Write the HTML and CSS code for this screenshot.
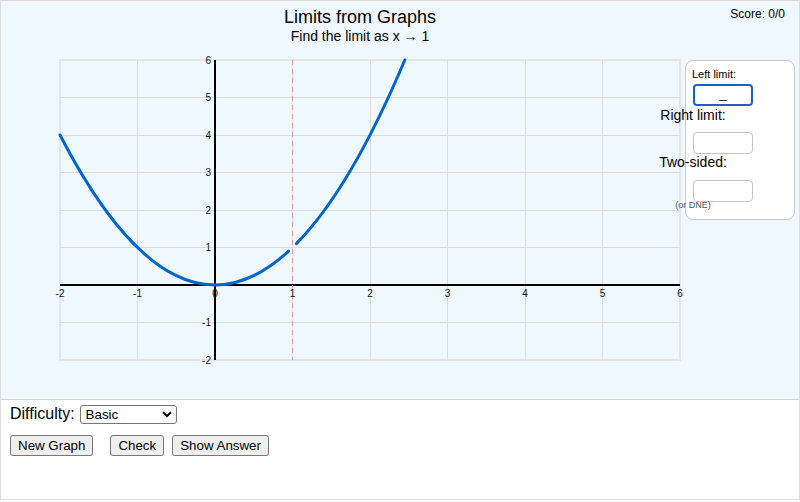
FILE: index.html
```html
<!DOCTYPE html>
<html lang="en">
<head>
<meta charset="utf-8">
<title>Limits from Graphs</title>
<link rel="stylesheet" href="styles.css">
</head>
<body>
<div class="app">
  <section class="stage">
    <header class="head">
      <h1 class="title">Limits from Graphs</h1>
      <p class="subtitle">Find the limit as x → 1</p>
    </header>
    <div class="score">Score: 0/0</div>
    <div class="board">
      <svg class="graph" width="684" height="320" viewBox="1 50 684 320" xmlns="http://www.w3.org/2000/svg">
        <rect x="60" y="60" width="620" height="300" fill="none" stroke="#e3e6e9" stroke-width="2"/>
        <g stroke="#dcdcdc" stroke-width="1" shape-rendering="crispEdges">
          <line x1="137.5" y1="60" x2="137.5" y2="360"/>
          <line x1="292.5" y1="60" x2="292.5" y2="360"/>
          <line x1="370.5" y1="60" x2="370.5" y2="360"/>
          <line x1="447.5" y1="60" x2="447.5" y2="360"/>
          <line x1="525.5" y1="60" x2="525.5" y2="360"/>
          <line x1="602.5" y1="60" x2="602.5" y2="360"/>
          <line x1="60" y1="97.5" x2="680" y2="97.5"/>
          <line x1="60" y1="135.5" x2="680" y2="135.5"/>
          <line x1="60" y1="172.5" x2="680" y2="172.5"/>
          <line x1="60" y1="210.5" x2="680" y2="210.5"/>
          <line x1="60" y1="247.5" x2="680" y2="247.5"/>
          <line x1="60" y1="322.5" x2="680" y2="322.5"/>
        </g>
        <g stroke="#000" stroke-width="2">
          <line x1="60" y1="285" x2="680" y2="285"/>
          <line x1="215" y1="60" x2="215" y2="360"/>
        </g>
        <line x1="292.5" y1="60" x2="292.5" y2="360" stroke="#e79a9a" stroke-width="1" stroke-dasharray="5 4"/>
        <g class="ticks" text-anchor="middle">
          <text x="60" y="297">-2</text>
          <text x="137.5" y="297">-1</text>
          <text x="215" y="297">0</text>
          <text x="292.5" y="297">1</text>
          <text x="370" y="297">2</text>
          <text x="447.5" y="297">3</text>
          <text x="525" y="297">4</text>
          <text x="602.5" y="297">5</text>
          <text x="680" y="297">6</text>
        </g>
        <g class="ticks" text-anchor="end">
          <text x="211" y="63.5">6</text>
          <text x="211" y="101">5</text>
          <text x="211" y="138.5">4</text>
          <text x="211" y="176">3</text>
          <text x="211" y="213.5">2</text>
          <text x="211" y="251">1</text>
          <text x="211" y="326">-1</text>
          <text x="211" y="363.5">-2</text>
        </g>
        <g fill="none" stroke="#0066cc" stroke-width="3" stroke-linecap="round">
          <path d="M60 135 Q174.31 356.25 288.63 251.16"/>
          <path d="M296.38 243.66 Q350.61 188.55 404.84 60"/>
        </g>
      </svg>
      <aside class="answers">
        <label class="lbl-small" for="left">Left limit:</label>
        <input id="left" class="ans ans-active" type="text" value="_">
        <label class="lbl-wide gap-a" for="right">Right limit:</label>
        <input id="right" class="ans ans-b" type="text">
        <label class="lbl-wide" for="two">Two-sided:</label>
        <input id="two" class="ans ans-c" type="text">
        <span class="hint">(or DNE)</span>
      </aside>
    </div>
  </section>
  <section class="controls">
    <div class="diff-row">
      <label class="diff-label" for="diff">Difficulty:</label>
      <span class="select-wrap">
        <select id="diff" class="select"><option>Basic</option><option>Intermediate</option><option>Advanced</option></select>
        <svg class="chev" width="10" height="7" viewBox="0 0 10 7"><path d="M1 1.2 L5 5.2 L9 1.2" fill="none" stroke="#000" stroke-width="2"/></svg>
      </span>
    </div>
    <div class="btn-row">
      <button class="btn btn-new" type="button">New Graph</button>
      <button class="btn btn-check" type="button">Check</button>
      <button class="btn" type="button">Show Answer</button>
    </div>
  </section>
</div>
</body>
</html>
```
FILE: styles.css
```css
* { box-sizing: border-box; }
html, body { margin: 0; padding: 0; background: #fff; }
body { font-family: "Liberation Sans", Arial, sans-serif; color: #000; }

.app {
  width: 800px;
  height: 500px;
  border: 1px solid #dcdcdc;
  display: flex;
  flex-direction: column;
}

.stage {
  position: relative;
  height: 399px;
  flex: none;
  background: #f0f8ff;
  border-bottom: 1px solid #cfd3d6;
  padding-top: 6px;
}

.head {
  width: 718px;
  text-align: center;
}
.title {
  margin: 0;
  font-size: 18px;
  line-height: 21px;
  font-weight: normal;
}
.subtitle {
  margin: 0;
  font-size: 14px;
  line-height: 16px;
}
.score {
  position: absolute;
  top: 6px;
  right: 14px;
  font-size: 12px;
  line-height: 14px;
}

.board {
  display: flex;
  align-items: flex-start;
  margin-top: 6px;
}
.graph { display: block; flex: none; overflow: visible; }
.ticks text {
  font-family: "Liberation Sans", Arial, sans-serif;
  font-size: 10px;
  fill: #111;
}

.answers {
  flex: none;
  width: 110px;
  margin-top: 10px;
  background: #fff;
  border: 1px solid #c8c8c8;
  border-radius: 8px;
  padding: 7px 7px 9px 7px;
  display: flex;
  flex-direction: column;
  align-items: flex-start;
}
.lbl-small {
  font-size: 11px;
  line-height: 13px;
  margin-left: -1px;
}
.lbl-wide {
  width: 120px;
  margin-left: -60px;
  text-align: center;
  font-size: 14px;
  line-height: 16px;
}
.gap-a { margin-top: 1px; }
.ans {
  width: 60px;
  height: 22px;
  border: 1px solid #c4c4c4;
  border-radius: 4px;
  background: #fff;
  font-family: "Liberation Sans", Arial, sans-serif;
  font-size: 13px;
  text-align: center;
  padding: 0 0 4px 0;
  outline: none;
}
.ans-active {
  margin-top: 3px;
  border: 2px solid #1565c8;
}
.ans-b { margin-top: 9px; }
.ans-c { margin-top: 10px; }
.hint {
  width: 120px;
  margin-left: -60px;
  margin-top: -2px;
  text-align: center;
  font-size: 9px;
  line-height: 10px;
  color: #555;
}

.controls {
  flex: 1;
  background: #fff;
  padding: 4px 9px 0 9px;
}
.diff-row {
  display: flex;
  align-items: center;
  height: 20px;
}
.diff-label {
  font-size: 16px;
  line-height: 18px;
}
.select-wrap {
  position: relative;
  display: inline-block;
  margin-left: 5px;
  height: 19px;
}
.select {
  -webkit-appearance: none;
  appearance: none;
  width: 97px;
  height: 19px;
  border: 1px solid #767676;
  border-radius: 3px;
  background: #fff;
  font-family: "Liberation Sans", Arial, sans-serif;
  font-size: 13.33px;
  padding: 0 0 0 5px;
  color: #000;
  display: block;
}
.chev {
  position: absolute;
  right: 5px;
  top: 6px;
  pointer-events: none;
}

.btn-row {
  display: flex;
  margin-top: 11px;
}
.btn {
  height: 21px;
  padding: 0 7px;
  border: 1px solid #767676;
  border-radius: 3px;
  background: #efefef;
  font-family: "Liberation Sans", Arial, sans-serif;
  font-size: 13.33px;
  color: #000;
  margin: 0;
}
.btn-new { margin-right: 17px; }
.btn-check { margin-right: 8px; }
```
